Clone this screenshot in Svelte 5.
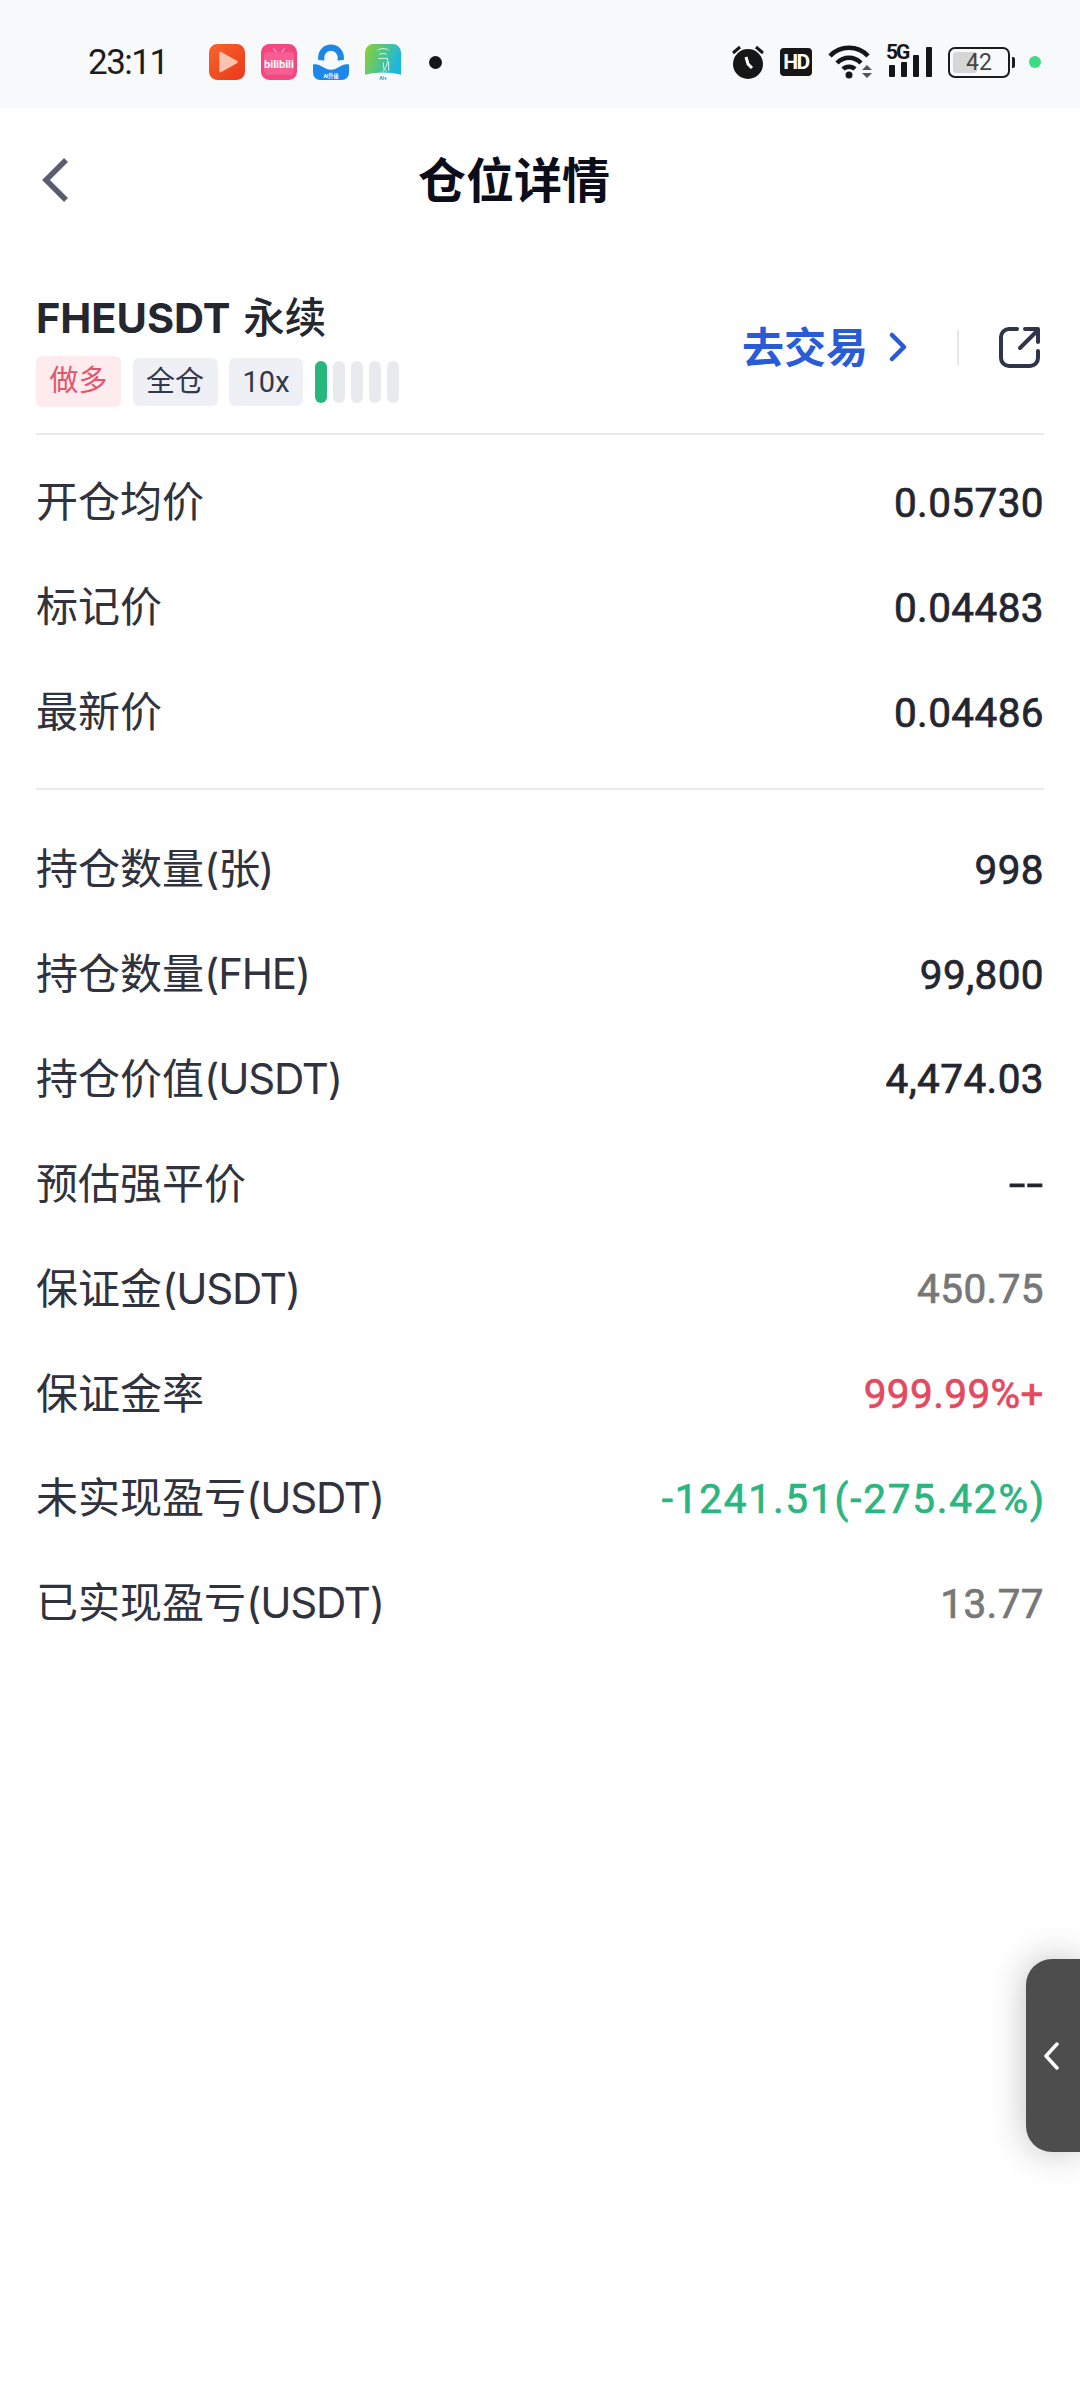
<script>
  const group1 = [
    { label: '开仓均价', value: '0.05730' },
    { label: '标记价', value: '0.04483' },
    { label: '最新价', value: '0.04486' }
  ];
  const group2 = [
    { label: '持仓数量', unit: '(张)', value: '998' },
    { label: '持仓数量', unit: '(FHE)', value: '99,800' },
    { label: '持仓价值', unit: '(USDT)', value: '4,474.03' },
    { label: '预估强平价', value: '--', tone: 'dash' },
    { label: '保证金', unit: '(USDT)', value: '450.75', tone: 'muted' },
    { label: '保证金率', value: '999.99%+', tone: 'red' },
    { label: '未实现盈亏', unit: '(USDT)', value: '-1241.51(-275.42%)', tone: 'green' },
    { label: '已实现盈亏', unit: '(USDT)', value: '13.77', tone: 'muted' }
  ];
</script>

<div class="page">
  <header class="status">
    <span class="time">23:11</span>
    <div class="apps">
      <svg class="app" viewBox="0 0 35 35">
        <defs><linearGradient id="g1" x1="0" y1="0" x2="1" y2="1"><stop offset="0" stop-color="#f9642a"/><stop offset="1" stop-color="#e8391a"/></linearGradient></defs>
        <rect width="35" height="35" rx="8" fill="url(#g1)"/>
        <path d="M11 8.500L27 17.500L11 26.500Z" fill="#fcc4b0" stroke="#fcc4b0" stroke-width="2" stroke-linejoin="round"/>
      </svg>
      <svg class="app" viewBox="0 0 35 35">
        <rect width="35" height="35" rx="8" fill="#f5477f"/>
        <path d="M12 4l3 4M23 4l-3 4" stroke="#fa8fb0" stroke-width="1.500"/>
        <rect x="3" y="8" width="29" height="22" rx="4" fill="#f75f92"/>
        <text x="17.500" y="23" text-anchor="middle" class="bili" textLength="29" lengthAdjust="spacingAndGlyphs">bilibili</text>
      </svg>
      <svg class="app" viewBox="0 0 35 35">
        <path d="M8 19V13a9.500 9.500 0 0 1 19 0v5" fill="none" stroke="#1d86e6" stroke-width="6"/>
        <path d="M0 18c6-3 11 1 17.500 1S29 15 35 18v10a7 7 0 0 1-7 7H7a7 7 0 0 1-7-7Z" fill="#1c88e8"/>
        <path d="M0 17c6-3 11 0 17.500 0S29 14 35 17v3c-6-2-11 5-17.500 5S6 18 0 20Z" fill="#f4fbff"/>
        <text x="17.500" y="33" text-anchor="middle" class="tiny">AI升级</text>
      </svg>
      <svg class="app" viewBox="0 0 35 35">
        <defs><linearGradient id="g4" x1="0" y1="0" x2="1" y2="0.300"><stop offset="0" stop-color="#8ed12c"/><stop offset="1" stop-color="#1cb8dc"/></linearGradient></defs>
        <path d="M8 0h19a8 8 0 0 1 8 8v22c-11-3-24-3-35 0V8a8 8 0 0 1 8-8Z" fill="url(#g4)"/>
        <path d="M12 6c3-2 8-2 11 0M14 10c2-1 5-1 7 0M13 14h9c0 6-2 10-5 13M18 18v4c0 2 1 3 3 5M23 17v9" fill="none" stroke="#e6f8e6" stroke-width="0.900"/>
        <text x="17.500" y="35" text-anchor="middle" class="tiny teal">AI+</text>
      </svg>
      <span class="notif-dot"></span>
    </div>
    <div class="sys">
      <svg class="alarm" viewBox="0 0 32 34">
        <path d="M1 8l7-6M31 8l-7-6" stroke="#161616" stroke-width="3"/>
        <circle cx="16" cy="19" r="15" fill="#161616"/>
        <path d="M14 12l2 7 4 4" fill="none" stroke="#fff" stroke-width="3"/>
      </svg>
      <span class="hd">HD</span>
      <svg class="wifi" viewBox="0 0 45 34">
        <path d="M2 11c10-11 28-11 38 0M9 18c7-7 17-7 24 0M15 24c3-3 9-3 12 0" fill="none" stroke="#161616" stroke-width="4.500"/>
        <circle cx="21" cy="30" r="3.500" fill="#161616"/>
        <path d="M34 25l5-5 5 5ZM34 28l5 5 5-5Z" fill="#555"/>
      </svg>
      <div class="signal">
        <span class="fiveg">5G</span>
        <svg class="bars" viewBox="0 0 46 30">
          <rect x="3" y="18" width="6" height="12" rx="1" fill="#161616"/>
          <rect x="15" y="15" width="6" height="15" rx="1" fill="#161616"/>
          <rect x="27" y="8" width="6" height="22" rx="1" fill="#161616"/>
          <rect x="40" y="0" width="6" height="30" rx="1" fill="#161616"/>
        </svg>
      </div>
      <div class="battery">
        <div class="cell"><span class="level"></span><span class="pct">42</span></div>
        <span class="cap"></span>
      </div>
      <span class="green-dot"></span>
    </div>
  </header>

  <nav class="nav">
    <svg class="back" viewBox="0 0 28 46"><path d="M24 3L4 23l20 20" fill="none" stroke="#5a5d70" stroke-width="5.500"/></svg>
    <h1>仓位详情</h1>
  </nav>

  <section class="symbol">
    <div class="sym-left">
      <div class="sym-name">FHEUSDT <span>永续</span></div>
      <div class="tags">
        <span class="tag long">做多</span>
        <span class="tag">全仓</span>
        <span class="tag lev">10x</span>
        <div class="meter">
          <i class="on"></i><i></i><i></i><i></i><i></i>
        </div>
      </div>
    </div>
    <div class="sym-right">
      <span class="trade">去交易</span>
      <svg class="chev" viewBox="0 0 18 30"><path d="M3 3l12 12L3 27" fill="none" stroke="#2a5bd7" stroke-width="4.500" stroke-linecap="round" stroke-linejoin="round"/></svg>
      <span class="vline"></span>
      <svg class="share" viewBox="0 0 42 42">
        <path d="M18 3H10a8 8 0 0 0-8 8v21a8 8 0 0 0 8 8h21a8 8 0 0 0 8-8v-7" fill="none" stroke="#30344a" stroke-width="4" stroke-linecap="round"/>
        <path d="M21 22L39 4M26 3h13v13" fill="none" stroke="#30344a" stroke-width="4" stroke-linecap="round" stroke-linejoin="round"/>
      </svg>
    </div>
  </section>

  <section class="rows first">
    {#each group1 as row}
      <div class="row"><span class="label">{row.label}</span><span class="value">{row.value}</span></div>
    {/each}
  </section>

  <section class="rows second">
    {#each group2 as row}
      <div class="row"><span class="label">{row.label}{#if row.unit}<span class="unit">{row.unit}</span>{/if}</span><span class="value {row.tone ?? ''}">{row.value}</span></div>
    {/each}
  </section>

  <aside class="handle">
    <svg viewBox="0 0 16 28"><path d="M14 2L3 14l11 12" fill="none" stroke="#fff" stroke-width="3.500" stroke-linecap="round" stroke-linejoin="round"/></svg>
  </aside>
</div>

<style>
  :global(body) { margin: 0; background: #fff; }
  .page {
    position: relative;
    width: 1080px;
    height: 2400px;
    overflow: hidden;
    background: #fff;
    font-family: Inter, "Noto Sans CJK SC", sans-serif;
    color: #23262f;
  }
  .status {
    height: 108px;
    background: #f8f9fb;
    display: flex;
    align-items: center;
    padding: 16px 39px 0 88px;
    box-sizing: border-box;
    font-family: Roboto, sans-serif;
  }
  .time { font-size: 35px; letter-spacing: -1.500px; color: #1c1c1c; width: 121px; flex: none; }
  .apps { display: flex; align-items: center; gap: 16px; }
  .app { width: 36px; height: 36px; display: block; }
  .bili { font: 700 11px Roboto, sans-serif; fill: #fff; }
  .tiny { font: 700 5px Roboto, "Noto Sans CJK SC", sans-serif; fill: #fff; }
  .teal { fill: #2aa8c8; }
  .notif-dot { width: 13px; height: 13px; border-radius: 50%; background: #161616; margin-left: 12px; }
  .sys { margin-left: auto; display: flex; align-items: center; }
  .alarm { width: 32px; height: 34px; margin-right: 16px; }
  .hd {
    width: 32px; height: 28px; background: #161616; color: #fff; border-radius: 4px;
    font: 700 21px Roboto, sans-serif;
    letter-spacing: -1.500px; text-align: center; line-height: 28px; margin-right: 16px;
  }
  .wifi { width: 45px; height: 34px; margin-right: 13px; }
  .signal { position: relative; width: 46px; height: 32px; margin-right: 16px; }
  .bars { position: absolute; left: 0; top: 1px; width: 46px; height: 30px; }
  .fiveg {
    position: absolute; left: 0; top: -3px; font: 700 21px Roboto, sans-serif; letter-spacing: -2px; color: #161616; line-height: 18px;
  }
  .battery { display: flex; align-items: center; margin-right: 14px; }
  .cell {
    position: relative; width: 58px; height: 27px; border: 2.500px solid #1c1c1c; border-radius: 7px;
    display: flex; align-items: center; justify-content: center;
  }
  .level { position: absolute; left: 3px; top: 3px; bottom: 3px; width: 24px; background: #d6d6d6; border-radius: 3px; }
  .pct { position: relative; font-size: 23px; color: #444; line-height: 1; }
  .cap { width: 3px; height: 11px; background: #1c1c1c; margin-left: 2px; border-radius: 0 2px 2px 0; }
  .green-dot { width: 12px; height: 12px; border-radius: 50%; background: #3ddc84; }

  .nav {
    height: 144px;
    display: flex;
    align-items: center;
    padding-left: 42px;
  }
  .back { width: 28px; height: 46px; flex: none; }
  h1 {
    margin: 1px 0 0 348px;
    font-size: 48px;
    font-weight: 700;
    color: #0b0e1a;
    line-height: 1;
  }

  .symbol {
    margin: 0 36px;
    height: 182.500px;
    box-sizing: border-box;
    border-bottom: 2px solid #e9ebee;
    display: flex;
    align-items: center;
    justify-content: space-between;
  }
  .sym-left { padding-top: 15px; }
  .sym-name { font-size: 41.500px; font-weight: 700; line-height: 50px; color: #25272e; word-spacing: 3px; white-space: nowrap; }
  .sym-name span { font-weight: 500; }
  .tags { display: flex; align-items: center; gap: 11.500px; margin-top: 13.500px; }
  .tag {
    height: 48px; line-height: 48px; padding: 0 13.500px; background: #eef0f6; border-radius: 6px;
    font-size: 29px; color: #33384a; box-sizing: border-box; font-family: Roboto, "Noto Sans CJK SC", sans-serif;
  }
  .tag.long { background: #fdebee; color: #e2566c; height: 51px; line-height: 51px; }
  .tag.lev { padding: 0 13.500px; }
  .meter { display: flex; gap: 6px; }
  .meter i { width: 12px; height: 42px; border-radius: 6px; background: #e9eaee; }
  .meter i.on { background: #27b67c; }
  .sym-right { display: flex; align-items: center; padding-right: 3px; padding-top: 10px; }
  .trade { font-size: 42px; font-weight: 700; color: #2a5bd7; line-height: 1; padding-top: 2px; }
  .chev { width: 18px; height: 30px; margin-left: 21px; }
  .vline { width: 2px; height: 35px; background: #e6e7ea; margin-left: 50px; margin-right: 40px; }
  .share { width: 42px; height: 42px; }

  .rows { margin: 0 36px; }
  .rows.first { padding: 14.500px 0 24px; border-bottom: 2px solid #e9ebee; }
  .rows.second { padding-top: 26px; }
  .row {
    height: 104.900px;
    display: flex;
    align-items: center;
    justify-content: space-between;
  }
  .label { font-size: 42px; color: #30333d; padding-bottom: 5px; }
  .unit { letter-spacing: -1.200px; }
  .value {
    font: 400 40.500px Roboto, sans-serif;
    letter-spacing: 0.400px;
    -webkit-text-stroke: 0.700px currentColor;
    color: #23262f;
    padding-top: 3px;
  }
  .value.muted { color: #777; }
  .value.red { color: #e5495f; }
  .value.green { color: #2bb57f; letter-spacing: 1.800px; margin-right: -1.800px; }
  .value.dash { letter-spacing: 1px; transform: scaleX(1.45); transform-origin: right center; }

  .handle {
    position: absolute;
    left: 1026px;
    top: 1959px;
    width: 54px;
    height: 193px;
    background: #4d4d4d;
    border-radius: 26px 0 0 26px;
    box-shadow: 0 0 36px rgba(0, 0, 0, 0.25);
    display: flex;
    align-items: center;
  }
  .handle svg { width: 16px; height: 28px; margin-left: 17px; }
</style>
